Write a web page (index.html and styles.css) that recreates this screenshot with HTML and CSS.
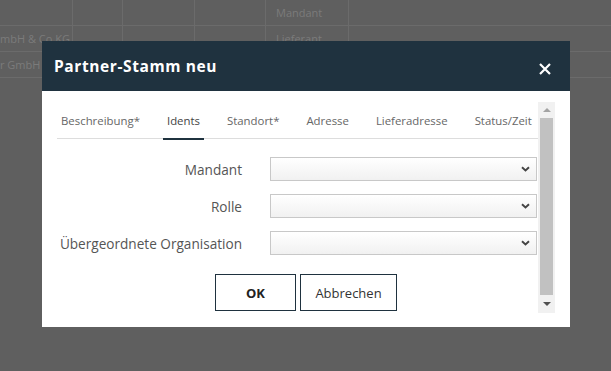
FILE: index.html
```html
<!DOCTYPE html>
<html lang="de">
    <head>
        <meta charset="utf-8">
        <title>Partner-Stamm neu</title>
        <link rel="stylesheet" href="styles.css">
    </head>
    <body>
        <div class="grid">
            <div class="gridRow">
                <div class="cell c1"></div><div class="cell c2"></div><div class="cell c3"></div><div class="cell c4"></div><div class="cell c5">Mandant</div><div class="cell c6"></div>
            </div>
            <div class="gridRow">
                <div class="cell c1">mbH &amp; Co.KG</div><div class="cell c2"></div><div class="cell c3"></div><div class="cell c4"></div><div class="cell c5">Lieferant</div><div class="cell c6"></div>
            </div>
            <div class="gridRow">
                <div class="cell c1">r GmbH</div><div class="cell c2"></div><div class="cell c3"></div><div class="cell c4"></div><div class="cell c5"></div><div class="cell c6"></div>
            </div>
        </div>

        <div class="dialog">
            <div class="dialogHeader">
                <span class="dialogTitle">Partner-Stamm neu</span>
                <svg class="closeIcon" width="12" height="12" viewBox="0 0 12 12">
                    <path d="M1 1 L11 11 M11 1 L1 11" stroke="#ffffff" stroke-width="2.2" fill="none"/>
                </svg>
            </div>
            <div class="dialogBody">
                <div class="dialogContent">
                    <div class="tabs">
                        <span class="tab">Beschreibung*</span>
                        <span class="tab active">Idents</span>
                        <span class="tab">Standort*</span>
                        <span class="tab">Adresse</span>
                        <span class="tab">Lieferadresse</span>
                        <span class="tab">Status/Zeit</span>
                    </div>
                    <div class="formRows">
                        <div class="formRow">
                            <label class="formLabel">Mandant</label>
                            <div class="selectBox">
                                <svg width="9" height="6" viewBox="0 0 9 6"><path d="M1 1.2 L4.5 4.5 L8 1.2" stroke="#444" stroke-width="1.9" fill="none"/></svg>
                            </div>
                        </div>
                        <div class="formRow">
                            <label class="formLabel">Rolle</label>
                            <div class="selectBox">
                                <svg width="9" height="6" viewBox="0 0 9 6"><path d="M1 1.2 L4.5 4.5 L8 1.2" stroke="#444" stroke-width="1.9" fill="none"/></svg>
                            </div>
                        </div>
                        <div class="formRow">
                            <label class="formLabel">Übergeordnete Organisation</label>
                            <div class="selectBox">
                                <svg width="9" height="6" viewBox="0 0 9 6"><path d="M1 1.2 L4.5 4.5 L8 1.2" stroke="#444" stroke-width="1.9" fill="none"/></svg>
                            </div>
                        </div>
                    </div>
                    <div class="buttonRow">
                        <button type="button" class="btn btnOk">OK</button>
                        <button type="button" class="btn">Abbrechen</button>
                    </div>
                </div>
                <div class="scrollbar">
                    <div class="arrowUp"></div>
                    <div class="thumb"></div>
                    <div class="arrowDown"></div>
                </div>
            </div>
        </div>
    </body>
</html>
```

FILE: styles.css
```css
body {
    margin: 0;
    background: #5f5f5f;
    font-family: "Open Sans", "Noto Sans", sans-serif;
    width: 611px;
    height: 371px;
    overflow: hidden;
    position: relative;
}
.grid {
    color: #7b7b7b;
    font-size: 11px;
}
.gridRow {
    display: flex;
    height: 25px;
    border-bottom: 1px solid #6b6b6b;
}
.cell {
    border-right: 1px solid #6b6b6b;
    line-height: 25px;
    white-space: nowrap;
    overflow: hidden;
    box-sizing: border-box;
}
.c1 { width: 73px; }
.c2 { width: 50px; }
.c3 { width: 72px; }
.c4 { width: 71px; }
.c5 { width: 83px; padding-left: 10px; }
.c6 { flex: 1; border-right: none; }

.dialog {
    position: absolute;
    left: 42px;
    top: 41px;
    width: 528px;
    height: 286px;
    background: #ffffff;
}
.dialogHeader {
    height: 50px;
    background: #1f323f;
    display: flex;
    align-items: center;
    justify-content: space-between;
    padding: 0 19px 0 12px;
}
.dialogTitle {
    color: #ffffff;
    font-weight: bold;
    font-size: 15.5px;
    letter-spacing: 0.6px;
}
.closeIcon {
    margin-top: 6px;
}
.dialogBody {
    display: flex;
    padding: 11px 15px 0 15px;
    height: 211px;
}
.dialogContent {
    flex: 1;
    overflow: hidden;
}
.tabs {
    display: flex;
    gap: 19px;
    height: 37px;
    border-bottom: 1px solid #dddddd;
    box-sizing: border-box;
}
.tab {
    font-size: 11.4px;
    color: #666666;
    padding: 1px 4px 0;
    line-height: 36px;
    height: 36px;
    box-sizing: border-box;
    margin-bottom: -1px;
    white-space: nowrap;
}
.tab.active {
    color: #444444;
    border-bottom: 2px solid #1f323f;
    height: 38px;
}
.formRows {
    display: flex;
    flex-direction: column;
    gap: 13px;
    margin-top: 18px;
}
.formRow {
    display: flex;
    align-items: center;
    gap: 28px;
}
.formLabel {
    width: 185px;
    text-align: right;
    font-size: 13.6px;
    color: #555555;
    white-space: nowrap;
}
.selectBox {
    width: 267px;
    height: 24px;
    box-sizing: border-box;
    border: 1px solid #c8c8c8;
    background: linear-gradient(#ffffff, #f1f1f1);
    display: flex;
    align-items: center;
    justify-content: flex-end;
    padding-right: 6px;
}
.buttonRow {
    display: flex;
    gap: 4px;
    margin-top: 19px;
    margin-left: 158px;
}
.btn {
    height: 37px;
    background: #ffffff;
    border: 1px solid #1f323f;
    font-family: "Open Sans", "Noto Sans", sans-serif;
    font-size: 13px;
    color: #333333;
    padding: 0;
}
.btnOk {
    width: 81px;
    font-weight: bold;
    color: #222222;
}
.btn + .btn {
    width: 97px;
}
.scrollbar {
    width: 17px;
    height: 211px;
    background: #f1f1f1;
    display: flex;
    flex-direction: column;
    align-items: center;
}
.arrowUp, .arrowDown {
    width: 0;
    height: 0;
    border-left: 4px solid transparent;
    border-right: 4px solid transparent;
}
.arrowUp {
    border-bottom: 4px solid #a3a3a3;
    margin: 6px 0 6px;
}
.thumb {
    width: 13px;
    height: 177px;
    background: #c1c1c1;
}
.arrowDown {
    border-top: 4px solid #505050;
    margin-top: 7px;
}
```
